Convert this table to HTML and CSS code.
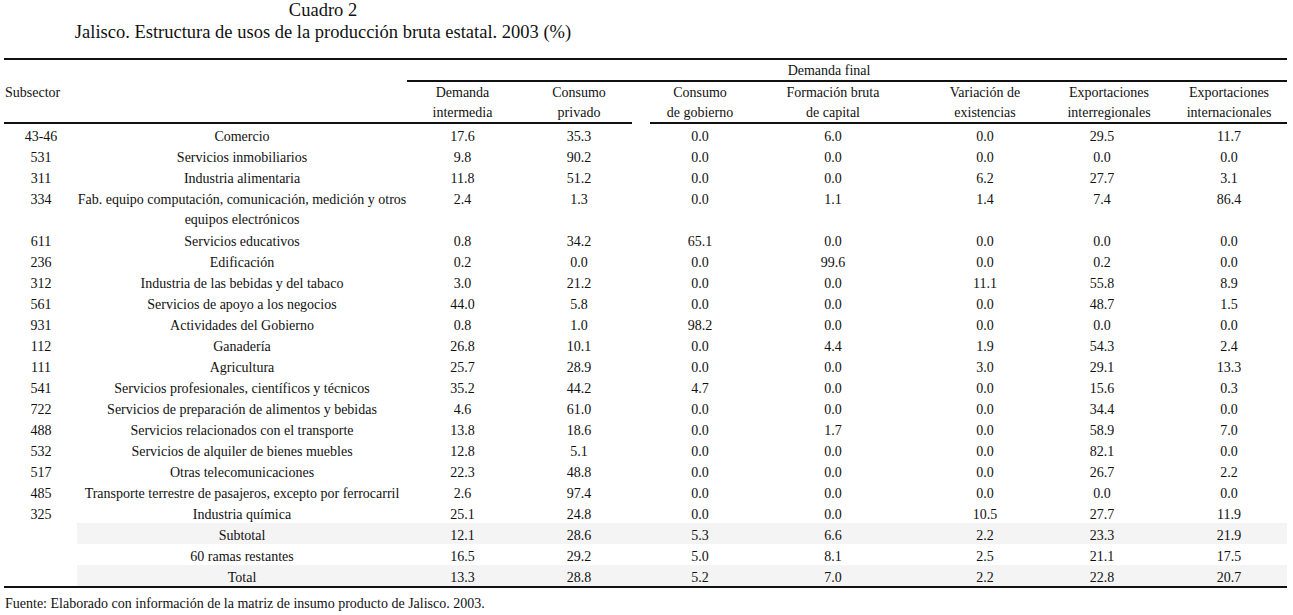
FILE: index.html
```html
<!DOCTYPE html>
<html lang="es">
<head>
<meta charset="utf-8">
<title>Cuadro 2</title>
<link rel="stylesheet" href="styles.css">
</head>
<body>
<div class="title">
  <div class="t1">Cuadro 2</div>
  <div class="t2">Jalisco. Estructura de usos de la producción bruta estatal. 2003 (%)</div>
</div>
<table class="tbl">
  <colgroup>
    <col class="w-code"><col class="w-desc"><col class="w-dem"><col class="w-priv"><col class="w-sp">
    <col class="w-gob"><col class="w-fbk"><col class="w-var"><col class="w-inter"><col class="w-intl">
  </colgroup>
  <thead>
    <tr class="head-a">
      <th colspan="2"></th>
      <th colspan="8" class="df">Demanda final</th>
    </tr>
    <tr class="head-b">
      <th class="sub">Subsector</th>
      <th></th>
      <th>Demanda<br>intermedia</th>
      <th>Consumo<br>privado</th>
      <th class="sp"></th>
      <th>Consumo<br>de gobierno</th>
      <th>Formación bruta<br>de capital</th>
      <th>Variación de<br>existencias</th>
      <th>Exportaciones<br>interregionales</th>
      <th>Exportaciones<br>internacionales</th>
    </tr>
  </thead>
  <tbody>
    <tr><td>43-46</td><td>Comercio</td><td>17.6</td><td>35.3</td><td></td><td>0.0</td><td>6.0</td><td>0.0</td><td>29.5</td><td>11.7</td></tr>
    <tr><td>531</td><td>Servicios inmobiliarios</td><td>9.8</td><td>90.2</td><td></td><td>0.0</td><td>0.0</td><td>0.0</td><td>0.0</td><td>0.0</td></tr>
    <tr><td>311</td><td>Industria alimentaria</td><td>11.8</td><td>51.2</td><td></td><td>0.0</td><td>0.0</td><td>6.2</td><td>27.7</td><td>3.1</td></tr>
    <tr><td>334</td><td class="wrap">Fab. equipo computación, comunicación, medición y otros<br>equipos electrónicos</td><td>2.4</td><td>1.3</td><td></td><td>0.0</td><td>1.1</td><td>1.4</td><td>7.4</td><td>86.4</td></tr>
    <tr><td>611</td><td>Servicios educativos</td><td>0.8</td><td>34.2</td><td></td><td>65.1</td><td>0.0</td><td>0.0</td><td>0.0</td><td>0.0</td></tr>
    <tr><td>236</td><td>Edificación</td><td>0.2</td><td>0.0</td><td></td><td>0.0</td><td>99.6</td><td>0.0</td><td>0.2</td><td>0.0</td></tr>
    <tr><td>312</td><td>Industria de las bebidas y del tabaco</td><td>3.0</td><td>21.2</td><td></td><td>0.0</td><td>0.0</td><td>11.1</td><td>55.8</td><td>8.9</td></tr>
    <tr><td>561</td><td>Servicios de apoyo a los negocios</td><td>44.0</td><td>5.8</td><td></td><td>0.0</td><td>0.0</td><td>0.0</td><td>48.7</td><td>1.5</td></tr>
    <tr><td>931</td><td>Actividades del Gobierno</td><td>0.8</td><td>1.0</td><td></td><td>98.2</td><td>0.0</td><td>0.0</td><td>0.0</td><td>0.0</td></tr>
    <tr><td>112</td><td>Ganadería</td><td>26.8</td><td>10.1</td><td></td><td>0.0</td><td>4.4</td><td>1.9</td><td>54.3</td><td>2.4</td></tr>
    <tr><td>111</td><td>Agricultura</td><td>25.7</td><td>28.9</td><td></td><td>0.0</td><td>0.0</td><td>3.0</td><td>29.1</td><td>13.3</td></tr>
    <tr><td>541</td><td>Servicios profesionales, científicos y técnicos</td><td>35.2</td><td>44.2</td><td></td><td>4.7</td><td>0.0</td><td>0.0</td><td>15.6</td><td>0.3</td></tr>
    <tr><td>722</td><td>Servicios de preparación de alimentos y bebidas</td><td>4.6</td><td>61.0</td><td></td><td>0.0</td><td>0.0</td><td>0.0</td><td>34.4</td><td>0.0</td></tr>
    <tr><td>488</td><td>Servicios relacionados con el transporte</td><td>13.8</td><td>18.6</td><td></td><td>0.0</td><td>1.7</td><td>0.0</td><td>58.9</td><td>7.0</td></tr>
    <tr><td>532</td><td>Servicios de alquiler de bienes muebles</td><td>12.8</td><td>5.1</td><td></td><td>0.0</td><td>0.0</td><td>0.0</td><td>82.1</td><td>0.0</td></tr>
    <tr><td>517</td><td>Otras telecomunicaciones</td><td>22.3</td><td>48.8</td><td></td><td>0.0</td><td>0.0</td><td>0.0</td><td>26.7</td><td>2.2</td></tr>
    <tr><td>485</td><td>Transporte terrestre de pasajeros, excepto por ferrocarril</td><td>2.6</td><td>97.4</td><td></td><td>0.0</td><td>0.0</td><td>0.0</td><td>0.0</td><td>0.0</td></tr>
    <tr><td>325</td><td>Industria química</td><td>25.1</td><td>24.8</td><td></td><td>0.0</td><td>0.0</td><td>10.5</td><td>27.7</td><td>11.9</td></tr>
    <tr class="shade"><td></td><td>Subtotal</td><td>12.1</td><td>28.6</td><td></td><td>5.3</td><td>6.6</td><td>2.2</td><td>23.3</td><td>21.9</td></tr>
    <tr><td></td><td>60 ramas restantes</td><td>16.5</td><td>29.2</td><td></td><td>5.0</td><td>8.1</td><td>2.5</td><td>21.1</td><td>17.5</td></tr>
    <tr class="shade last"><td></td><td>Total</td><td>13.3</td><td>28.8</td><td></td><td>5.2</td><td>7.0</td><td>2.2</td><td>22.8</td><td>20.7</td></tr>
  </tbody>
</table>
<p class="source">Fuente: Elaborado con información de la matriz de insumo producto de Jalisco. 2003.</p>
</body>
</html>
```

FILE: styles.css
```css
html, body {
  margin: 0;
  padding: 0;
  background: #ffffff;
}

body {
  font-family: "Liberation Serif", "Times New Roman", serif;
  color: #111111;
}

.title {
  width: 646px;
  text-align: center;
  font-size: 18.5px;
  line-height: 21px;
}

.title .t2 {
  margin-top: 1px;
}

.tbl {
  margin: 15px 0 0 4px;
  width: 1283px;
  table-layout: fixed;
  border-collapse: separate;
  border-spacing: 0;
  border-top: 2px solid #111111;
  font-size: 14px;
}

.w-code { width: 73px; }
.w-desc { width: 330px; }
.w-dem { width: 111px; }
.w-priv { width: 114px; }
.w-sp { width: 18px; }
.w-gob { width: 94px; }
.w-fbk { width: 174px; }
.w-var { width: 134px; }
.w-inter { width: 114px; }
.w-intl { width: 121px; }

.tbl th,
.tbl td {
  padding: 0;
  font-weight: normal;
  text-align: center;
  white-space: nowrap;
}

.head-a th {
  padding-top: 2px;
  line-height: 18px;
  vertical-align: top;
}

.head-a .df {
  padding-right: 36px;
  border-bottom: 2px solid #111111;
}

.head-b th {
  padding-top: 1px;
  line-height: 19.5px;
  vertical-align: top;
  border-bottom: 2px solid #111111;
}

.head-b th.sp {
  border-bottom: none;
}

.head-b th.sub {
  text-align: left;
  padding-left: 1px;
}

.tbl tbody td {
  padding-top: 4px;
  line-height: 17px;
  vertical-align: top;
}

.tbl tbody td.wrap {
  padding-top: 3px;
  line-height: 19.5px;
}

/* column alignment tweaks */
.tbl tbody td:nth-child(1) {
  padding-left: 1px;
}

.tbl tr > :nth-child(4) {
  padding-left: 8px;
}

.tbl tr > :nth-child(6) {
  padding-left: 6px;
}

.tbl tr > :nth-child(7) {
  padding-left: 4px;
}

.tbl tbody td:nth-child(9) {
  padding-right: 14px;
}

.tbl tr > :nth-child(10) {
  padding-left: 5px;
}

.head-a th:nth-child(2) {
  padding-left: 0;
}

.shade td {
  background: #f4f4f4;
}

.shade td:first-child {
  background: transparent;
}

.last td {
  border-bottom: 2px solid #111111;
}

.source {
  margin: 5px 0 0 5px;
  font-size: 14px;
  line-height: 21px;
}
```
